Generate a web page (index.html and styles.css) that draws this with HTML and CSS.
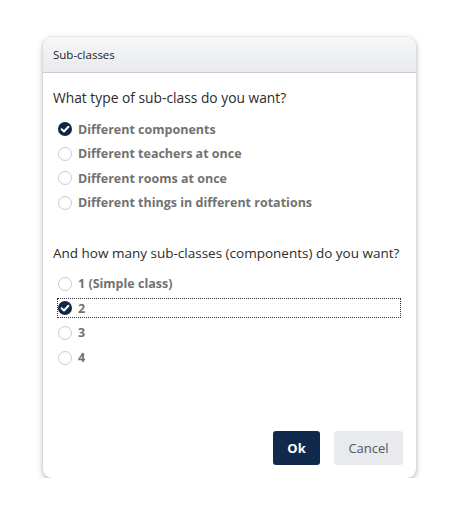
FILE: index.html
```html
<!DOCTYPE html>
<html>
<head>
<meta charset="utf-8">
<link rel="stylesheet" href="styles.css">
</head>
<body>
<div class="dialog">
  <div class="dialog-header">Sub-classes</div>
  <div class="dialog-body">
    <div class="question">What type of sub-class do you want?</div>
    <div class="options">
      <div class="option"><span class="radio checked"><svg viewBox="0 0 14 14" width="14" height="14"><circle cx="7" cy="7" r="7" fill="#0f2747"/><path d="M3.6 7.2 L6 9.5 L10.4 4.8" fill="none" stroke="#fff" stroke-width="2" stroke-linecap="round" stroke-linejoin="round"/></svg></span><span class="label">Different components</span></div>
      <div class="option"><span class="radio"></span><span class="label">Different teachers at once</span></div>
      <div class="option"><span class="radio"></span><span class="label">Different rooms at once</span></div>
      <div class="option"><span class="radio"></span><span class="label">Different things in different rotations</span></div>
    </div>
    <div class="question q2">And how many sub-classes (components) do you want?</div>
    <div class="options">
      <div class="option"><span class="radio"></span><span class="label">1 (Simple class)</span></div>
      <div class="option focused"><span class="radio checked"><svg viewBox="0 0 14 14" width="14" height="14"><circle cx="7" cy="7" r="7" fill="#0f2747"/><path d="M3.6 7.2 L6 9.5 L10.4 4.8" fill="none" stroke="#fff" stroke-width="2" stroke-linecap="round" stroke-linejoin="round"/></svg></span><span class="label">2</span></div>
      <div class="option"><span class="radio"></span><span class="label">3</span></div>
      <div class="option"><span class="radio"></span><span class="label">4</span></div>
    </div>
  </div>
  <div class="dialog-footer">
    <button class="btn btn-primary">Ok</button>
    <button class="btn btn-secondary">Cancel</button>
  </div>
</div>
</body>
</html>
```
FILE: styles.css
```css
html, body {
  margin: 0;
  padding: 0;
  background: #ffffff;
}
body {
  padding: 37px 0 0 43px;
  font-family: "Open Sans", "Noto Sans", sans-serif;
}
.dialog {
  width: 373px;
  height: 441px;
  box-sizing: border-box;
  background: #fff;
  border-radius: 9px;
  box-shadow: 0 2px 6px rgba(0,0,0,0.28), 0 0 2px rgba(0,0,0,0.12);
  display: flex;
  flex-direction: column;
  overflow: hidden;
}
.dialog-header {
  height: 36px;
  box-sizing: border-box;
  padding-left: 10px;
  display: flex;
  align-items: center;
  font-size: 11.5px;
  color: #222;
  background: linear-gradient(#f6f7f9, #e9eaee);
  border-bottom: 1px solid #c9cbd0;
}
.dialog-body {
  flex: 1;
  padding: 15px 13px 0 10px;
}
.question {
  font-size: 13.8px;
  color: #2b2b2b;
  line-height: 20px;
  white-space: nowrap;
}
.q2 {
  margin-top: 30px;
  font-size: 13.5px;
}
.options {
  margin-top: 11px;
  display: flex;
  flex-direction: column;
  gap: 4.6px;
}
.option {
  display: flex;
  align-items: center;
  height: 20px;
  padding-left: 5px;
}
.option.focused {
  outline: 1px dotted #333;
  outline-offset: -1px;
  margin-left: 4px;
  margin-right: 2px;
  padding-left: 1px;
}
.radio {
  width: 14px;
  height: 14px;
  box-sizing: border-box;
  border: 1px solid #c8ccd2;
  border-radius: 50%;
  background: #fff;
  flex-shrink: 0;
  display: flex;
}
.radio.checked {
  border: none;
}
.label {
  margin-left: 6px;
  font-size: 12.5px;
  font-weight: 700;
  color: #727272;
}
.dialog-footer {
  display: flex;
  justify-content: flex-end;
  gap: 14px;
  padding: 0 13px 13px 0;
}
.btn {
  height: 34px;
  border: none;
  border-radius: 3px;
  font-family: inherit;
  font-size: 13px;
}
.btn-primary {
  width: 47px;
  background: #0f2a4d;
  color: #fff;
  font-weight: 700;
}
.btn-secondary {
  width: 69px;
  background: #e8eaee;
  color: #4d5566;
}
```
